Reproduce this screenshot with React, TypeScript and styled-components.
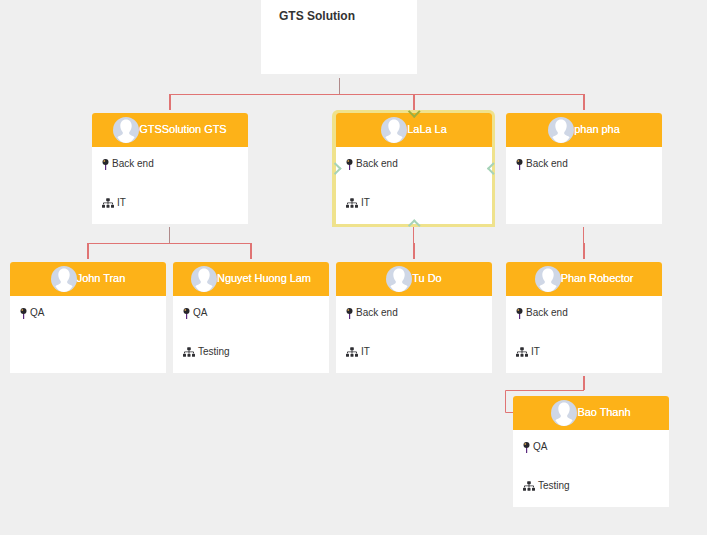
import { FC } from "react";
import styled, { createGlobalStyle } from "styled-components";
import { FaSitemap } from "react-icons/fa";

const GlobalStyle = createGlobalStyle`
  html, body {
    margin: 0;
    padding: 0;
    background: #efefef;
    font-family: "Liberation Sans", Arial, sans-serif;
  }
`;

type Side = "top" | "bottom" | "left" | "right";

interface Person {
  name: string;
  x: number;
  y: number;
  job: string;
  dept: string;
  selected?: boolean;
}

const people: Person[] = [
  { name: "GTSSolution GTS", x: 92, y: 113, job: "Back end", dept: "IT" },
  { name: "LaLa La", x: 336, y: 113, job: "Back end", dept: "IT", selected: true },
  { name: "phan pha", x: 506, y: 113, job: "Back end", dept: "" },
  { name: "John Tran", x: 10, y: 262, job: "QA", dept: "" },
  { name: "Nguyet Huong Lam", x: 173, y: 262, job: "QA", dept: "Testing" },
  { name: "Tu Do", x: 336, y: 262, job: "Back end", dept: "IT" },
  { name: "Phan Robector", x: 506, y: 262, job: "Back end", dept: "IT" },
  { name: "Bao Thanh", x: 513, y: 396, job: "QA", dept: "Testing" },
];

const Avatar: FC = () => (
  <AvatarCircle viewBox="0 0 26 26">
    <circle cx="13" cy="13" r="13" fill="#cfd7e6" />
    <path
      d="M13 2.500c-3.400 0-5.700 2.600-5.700 6.300 0 2.500 1 4.800 2.300 6.100.4.700.3 1.700-.2 2.300-1 1.100-3.500 1.600-5 3 2 3.400 4.800 5.800 8.600 5.800s6.600-2.400 8.600-5.800c-1.500-1.400-4-1.900-5-3-.5-.6-.6-1.600-.2-2.300 1.300-1.300 2.300-3.600 2.300-6.100 0-3.700-2.300-6.300-5.700-6.300z"
      fill="#fff"
    />
  </AvatarCircle>
);

const Pin: FC = () => (
  <PinIcon viewBox="0 0 7 11">
    <path d="M3 5h1.200v6H3z" fill="#5b2a7e" />
    <circle cx="3.500" cy="3" r="3" fill="#26262c" />
    <circle cx="2.300" cy="2" r="0.900" fill="#c9974a" />
  </PinIcon>
);

const Card: FC<{ person: Person }> = ({ person }) => (
  <Node $x={person.x} $y={person.y} $selected={person.selected}>
    <Header>
      <Avatar />
      <Name>{person.name}</Name>
    </Header>
    <Body>
      <InfoRow>
        <Pin />
        <span>{person.job}</span>
      </InfoRow>
      {person.dept && (
        <InfoRow>
          <FaSitemap size={12} color="#2f2f33" />
          <span>{person.dept}</span>
        </InfoRow>
      )}
    </Body>
    {person.selected && (
      <>
        <Handle $side="top" />
        <Handle $side="bottom" />
        <Handle $side="left" />
        <Handle $side="right" />
      </>
    )}
  </Node>
);

export default function App() {
  return (
    <>
      <GlobalStyle />
      <Canvas>
        <Lines width="707" height="535">
          <path d="M339.500 78V94M169.500 227V243" stroke="#b08a8a" fill="none" />
          <path d="M170 94.500H584M88 243.500H251" stroke="#e07474" fill="none" />
          <path
            d="M170 94V110M414 94V110M584 94V110M88 243V259M251 243V259M414 243V259M584 243V259"
            stroke="#e07474"
            strokeWidth="2"
            fill="none"
          />
          <path d="M413.500 227V243M583.500 227V243" stroke="#e07474" fill="none" />
          <path d="M584 376V390" stroke="#e07474" strokeWidth="2" fill="none" />
          <path d="M584 390.500H505.500V412.500H513" stroke="#e07474" fill="none" />
        </Lines>
        <RootNode>
          <RootTitle>GTS Solution</RootTitle>
        </RootNode>
        {people.map((p) => (
          <Card key={p.name} person={p} />
        ))}
      </Canvas>
    </>
  );
}

const Canvas = styled.div`
  position: relative;
  width: 707px;
  height: 535px;
  overflow: hidden;
  background: #efefef;
`;

const Lines = styled.svg`
  position: absolute;
  left: 0;
  top: 0;
`;

const RootNode = styled.div`
  position: absolute;
  left: 261px;
  top: 0;
  width: 156px;
  height: 74px;
  background: #fff;
`;

const RootTitle = styled.div`
  padding: 9px 0 0 18px;
  font-size: 12px;
  line-height: 14px;
  font-weight: 700;
  color: #333;
`;

const Node = styled.div<{ $x: number; $y: number; $selected?: boolean }>`
  position: absolute;
  left: ${(p) => p.$x}px;
  top: ${(p) => p.$y}px;
  width: 156px;
  height: 111px;
  background: #fff;
  border-radius: 3px 3px 0 0;
  box-shadow: ${(p) => (p.$selected ? "0 0 0 3px #efe28c, -1px 0 0 3px #efe28c" : "none")};
`;

const Header = styled.div`
  display: flex;
  align-items: center;
  justify-content: center;
  height: 34px;
  background: #fdb218;
  border-radius: 3px 3px 0 0;
`;

const AvatarCircle = styled.svg`
  width: 26px;
  height: 26px;
  flex: none;
`;

const Name = styled.div`
  padding-bottom: 2px;
  font-size: 11px;
  letter-spacing: -0.05px;
  color: #fff;
  white-space: nowrap;
  text-shadow: 0 0 0.6px #fff;
`;

const Body = styled.div`
  display: flex;
  flex-direction: column;
  gap: 27px;
  padding: 11px 10px 0;
`;

const InfoRow = styled.div`
  display: flex;
  align-items: center;
  gap: 3px;
  height: 12px;
  font-size: 10px;
  line-height: 12px;
  color: #333;
`;

const PinIcon = styled.svg`
  width: 7px;
  height: 11px;
  flex: none;
`;

const handleBorders: Record<Side, string> = {
  top: "0 2px 2px 0",
  bottom: "2px 0 0 2px",
  left: "2px 2px 0 0",
  right: "0 0 2px 2px",
};

const handlePlaces: Record<Side, string> = {
  top: "left: 73.75px; top: -5.75px;",
  bottom: "left: 73.75px; top: 107.75px;",
  left: "left: -5.25px; top: 50.75px;",
  right: "left: 152.75px; top: 50.75px;",
};

const Handle = styled.div<{ $side: Side }>`
  position: absolute;
  width: 6.5px;
  height: 6.5px;
  border-style: solid;
  border-color: ${(p) => (p.$side === "top" ? "#9cae3f" : "#a6d3b8")};
  border-width: ${(p) => handleBorders[p.$side]};
  transform: rotate(45deg);
  ${(p) => handlePlaces[p.$side]}
`;
